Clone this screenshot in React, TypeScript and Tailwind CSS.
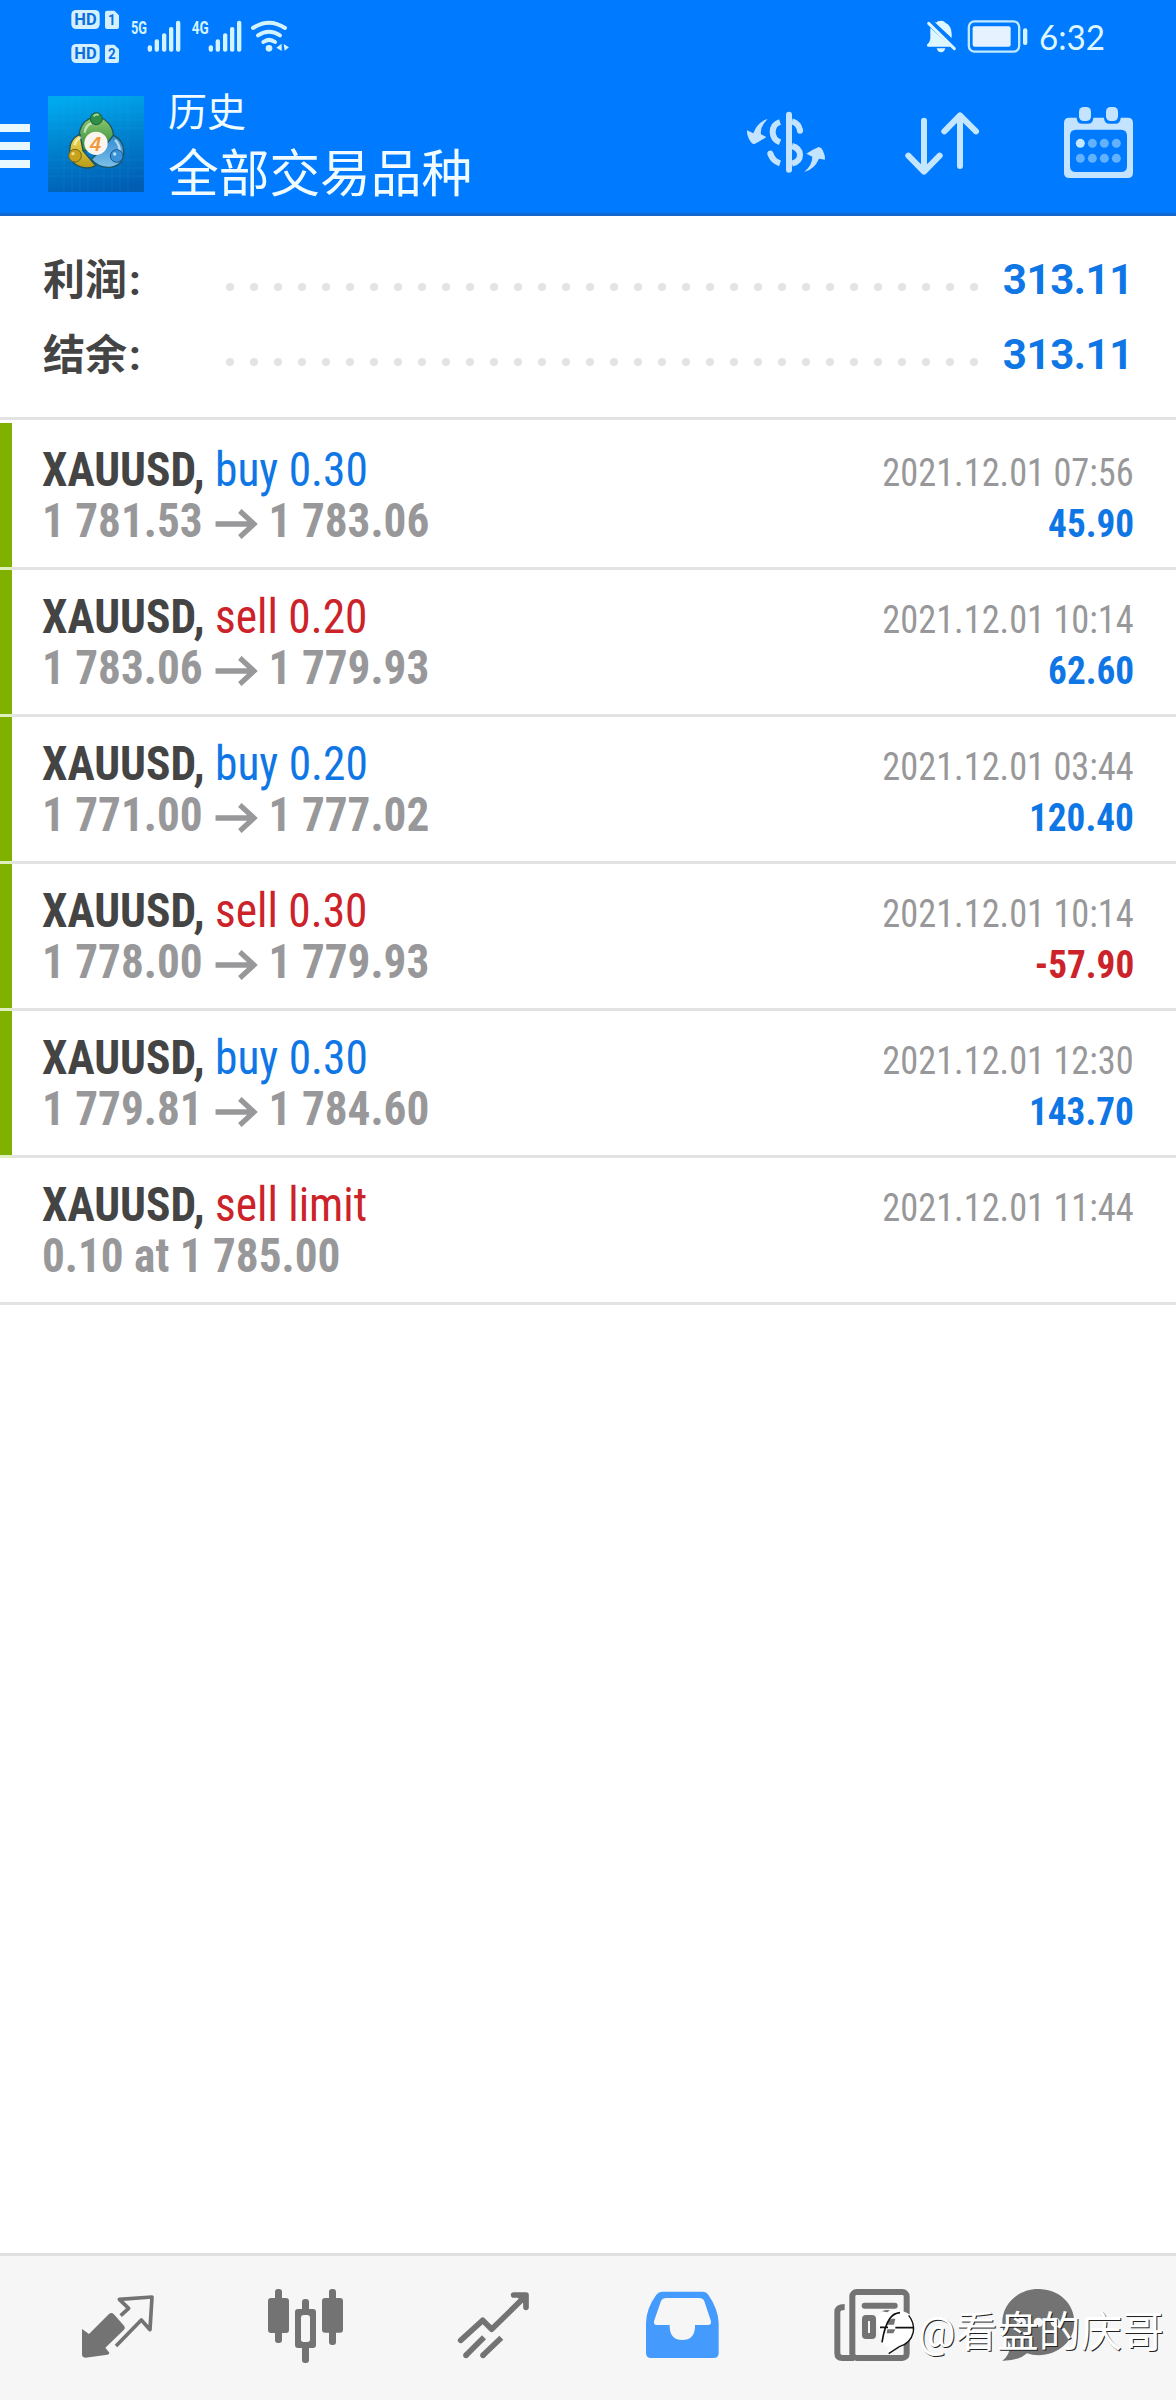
import type { ReactNode } from 'react'

type Deal = {
  side: 'buy' | 'sell'
  action: string
  open?: string
  close?: string
  detail?: string
  time: string
  profit?: string
}

const deals: Deal[] = [
  { side: 'buy', action: 'buy 0.30', open: '1 781.53', close: '1 783.06', time: '2021.12.01 07:56', profit: '45.90' },
  { side: 'sell', action: 'sell 0.20', open: '1 783.06', close: '1 779.93', time: '2021.12.01 10:14', profit: '62.60' },
  { side: 'buy', action: 'buy 0.20', open: '1 771.00', close: '1 777.02', time: '2021.12.01 03:44', profit: '120.40' },
  { side: 'sell', action: 'sell 0.30', open: '1 778.00', close: '1 779.93', time: '2021.12.01 10:14', profit: '-57.90' },
  { side: 'buy', action: 'buy 0.30', open: '1 779.81', close: '1 784.60', time: '2021.12.01 12:30', profit: '143.70' },
  { side: 'sell', action: 'sell limit', detail: '0.10 at 1 785.00', time: '2021.12.01 11:44' },
]

const summary = [
  { label: '利润', value: '313.11' },
  { label: '结余', value: '313.11' },
]

const SignalBars = ({ x }: { x: number }) => (
  <g fill="#d3f4ff">
    <rect x={x} y="136" width="13" height="19" rx="6" />
    <rect x={x + 21} y="118" width="13" height="37" rx="6" />
    <rect x={x + 43} y="100" width="13" height="55" rx="6" />
    <rect x={x + 64} y="81" width="13" height="74" rx="6" />
    <rect x={x + 85} y="62" width="13" height="93" rx="6" />
  </g>
)

const HdBadge = ({ y, sim }: { y: number; sim: string }) => (
  <g fontFamily="Roboto" fontWeight="700" fill="#0b6fdf">
    <rect x="214" y={y} width="85" height="57" rx="14" fill="#d3f0ff" />
    <text x="223" y={y + 46} fontSize="49" textLength="67" lengthAdjust="spacingAndGlyphs">HD</text>
    <path d={`M321 ${y + 2}h22l14 14v35q0 6-6 6h-30q-6 0-6-6v-43q0-6 6-6z`} fill="#d3f0ff" />
    <text x="324" y={y + 46} fontSize="46" textLength="23" lengthAdjust="spacingAndGlyphs">{sim}</text>
  </g>
)

const StatusBar = () => (
  <div className="flex h-[72px] justify-between">
    <svg className="ml-[66px]" width="234" height="72" viewBox="198 0 702 216">
      <HdBadge y={30} sim="1" />
      <HdBadge y={132} sim="2" />
      <g fontFamily="Roboto" fontWeight="700" fontSize="55" fill="#d3f4ff">
        <text x="393" y="102" textLength="48" lengthAdjust="spacingAndGlyphs">5G</text>
        <text x="575" y="103" textLength="51" lengthAdjust="spacingAndGlyphs">4G</text>
      </g>
      <SignalBars x={443} />
      <SignalBars x={626} />
      <g fill="none" stroke="#d3f4ff" strokeWidth="12" strokeLinecap="round">
        <path d="M759 84q48-32 96 0" />
        <path d="M774 106q33-22 66 0" />
        <path d="M790 126q17-13 35 0" />
      </g>
      <circle cx="807" cy="145" r="10" fill="#d3f4ff" />
      <path d="M845 131v22l-16-10zM851 132l16 10-13 10z" fill="#d3f4ff" />
    </svg>
    <svg className="mr-[66px]" width="190" height="72" viewBox="600 0 570 216">
      <path d="M648 68q4-6 15-6 9 0 13 6 19 9 19 34v12l-54-50z" fill="#def7ff" />
      <path d="M631 83l62 57h-69q-5-1-3-6 9-8 10-18z" fill="#def7ff" />
      <path d="M650 145h26q-3 12-13 12t-13-12z" fill="#def7ff" />
      <path d="M626 70l77 76" stroke="#def7ff" strokeWidth="9" strokeLinecap="round" />
      <rect x="746.500" y="64" width="151" height="91" rx="17" fill="none" stroke="#bfeaff" strokeWidth="7" />
      <rect x="758" y="79" width="114" height="61" rx="6" fill="#e6f2ff" />
      <rect x="909" y="85" width="13" height="50" rx="6" fill="#d3f4ff" />
      <text x="957" y="151" fontFamily="Lato" fontSize="106" fill="#def7ff" textLength="198" lengthAdjust="spacingAndGlyphs">6:32</text>
    </svg>
  </div>
)

const AppLogo = () => (
  <svg className="ml-[18px] mt-6" width="96" height="96" viewBox="144 288 288 288">
    <defs>
      <linearGradient id="sky" x1="0.4" y1="0" x2="0.6" y2="1">
        <stop offset="0" stopColor="#00a8ee" />
        <stop offset="0.5" stopColor="#007fcc" />
        <stop offset="1" stopColor="#005db2" />
      </linearGradient>
      <linearGradient id="leaf" x1="0" y1="0" x2="0" y2="1">
        <stop offset="0" stopColor="#8cc66c" />
        <stop offset="1" stopColor="#2c8a3c" />
      </linearGradient>
      <linearGradient id="gold" x1="0" y1="0" x2="0" y2="1">
        <stop offset="0" stopColor="#f0dc50" />
        <stop offset="1" stopColor="#b99a18" />
      </linearGradient>
      <linearGradient id="water" x1="0" y1="0" x2="0" y2="1">
        <stop offset="0" stopColor="#2f8cd0" />
        <stop offset="1" stopColor="#7cc0ea" />
      </linearGradient>
    </defs>
    <rect x="144" y="288" width="288" height="288" fill="url(#sky)" />
    <path
      d="M192 288v288M216 288v288M240 288v288M264 288v288M312 288v288M336 288v288M360 288v288M384 288v288M144 336h288M144 360h288M144 384h288M144 480h288M144 504h288M144 528h288"
      stroke="#4cc4f5"
      strokeOpacity="0.15"
      strokeWidth="2"
    />
    <g stroke="#1d5560" strokeWidth="4">
      <path d="M237 412q0-42 35-58h33q36 18 36 62 0 22-12 36h-80q-12-16-12-40z" fill="url(#leaf)" />
      <path d="M340 406q31 14 31 50 0 40-40 46-36 2-57-24l36-34z" fill="url(#water)" />
      <path d="M240 404q-32 10-31 54 2 40 50 46 18 0 28-7l-38-45z" fill="url(#gold)" />
    </g>
    <path d="M254 398q4-24 20-28M345 420q14 12 14 34M224 436q4-20 20-24" fill="none" stroke="#fff" strokeOpacity="0.6" strokeWidth="7" />
    <circle cx="289" cy="356" r="18" fill="#2f8f45" stroke="#1c5c48" strokeWidth="3" />
    <circle cx="225" cy="467" r="19" fill="#c9a21c" stroke="#6e6420" strokeWidth="3" />
    <circle cx="350" cy="468" r="19" fill="#3a92d8" stroke="#1b5790" strokeWidth="3" />
    <path d="M281 349q6-8 15-4" fill="none" stroke="#a5d8a0" strokeWidth="6" />
    <circle cx="219" cy="461" r="5" fill="#f4e08a" />
    <circle cx="344" cy="462" r="5" fill="#b5e0fa" />
    <circle cx="288" cy="430" r="35" fill="#fbf5f0" />
    <text x="270" y="452" fontFamily="Liberation Sans" fontStyle="italic" fontWeight="700" fontSize="60" fill="#f09a3c">4</text>
  </svg>
)

const HeaderActions = () => (
  <svg className="ml-auto" width="456" height="141" viewBox="0 216 1368 423">
    {/* 货币 */}
    <g fill="none" stroke="#c4e3ff" strokeWidth="18">
      <path d="M207 344v165" strokeLinecap="round" />
      <path d="M180 366q-22 7-22 30 0 22 22 31M151 461q7 22 29 29" />
      <path d="M216 364q20 5 24 28M216 438q24 7 24 27t-24 26" />
      <path d="M151 461l1 3M240 391v1" strokeLinecap="round" />
    </g>
    <path d="M143 357q-24 24-20 46l16 8q-18 12-37 22-7-2-11-9-11-18-10-33l19 9q12-34 43-43z" fill="#c4e3ff" />
    <path d="M253 516q24-22 24-46l-18-9q18-12 37-20 9 1 14 14 6 13 5 24l-18-3q-14 32-44 40z" fill="#c4e3ff" />
    {/* 排序 */}
    <g fill="none" stroke="#c4e6ff" strokeWidth="18" strokeLinecap="round" strokeLinejoin="round">
      <path d="M612 362v152M565 467l47 48 47-48" />
      <path d="M720 498V347M673 394l47-48 48 48" />
    </g>
    {/* 日历 */}
    <path
      d="M1048 353h22q0 18 17 18h16q17 0 17-18h32q0 18 17 18h16q17 0 17-18h21q16 0 16 16v150q0 15-16 15h-175q-16 0-16-15V369q0-16 16-16zM1068 389q-18 0-18 18v91q0 18 18 18h135q18 0 18-18v-91q0-18-18-18z"
      fillRule="evenodd"
      fill="#c4e3ff"
    />
    <rect x="1077" y="321" width="36" height="42" rx="14" fill="#c4e3ff" />
    <rect x="1158" y="321" width="36" height="42" rx="14" fill="#c4e3ff" />
    {[1081, 1117, 1153, 1189].map((cx) => (
      <g key={cx}>
        <circle cx={cx} cy="430" r="13.500" fill={cx === 1081 ? '#c4e9ff' : '#62b2ff'} />
        <circle cx={cx} cy="475" r="13.500" fill="#62b2ff" />
      </g>
    ))}
  </svg>
)

const Header = () => (
  <header className="h-[216px] border-b-[3px] border-[#1268cf] bg-[#007aff] text-[#f0fcff]">
    <StatusBar />
    <div className="flex h-[141px]">
      <div className="mt-[52px] flex w-[30px] flex-col gap-[10px]">
        <span className="h-2 bg-[#e8f8ff]"></span>
        <span className="h-2 bg-[#e8f8ff]"></span>
        <span className="h-2 bg-[#e8f8ff]"></span>
      </div>
      <AppLogo />
      <div className="ml-6 pt-3">
        <p className="text-[39px] leading-[58px]">历史</p>
        <p className="text-[50.7px] leading-[65px]">全部交易品种</p>
      </div>
      <HeaderActions />
    </div>
  </header>
)

const Arrow = () => (
  <svg className="mr-[12px] ml-[13px] inline-block" width="45" height="30" viewBox="0 0 45 30">
    <path d="M0 15h40M26 2l15 13-15 13" fill="none" stroke="#98989a" strokeWidth="5.500" />
  </svg>
)

const DealRow = ({ deal }: { deal: Deal }) => {
  const color = deal.side === 'buy' ? 'text-[#0f76e6]' : 'text-[#cc2229]'
  const profitColor = deal.profit?.startsWith('-') ? 'text-[#cc2229]' : 'text-[#0f76e6]'
  return (
    <li className="flex h-[147px] font-stretch-75%">
      <div className={deal.profit ? 'w-3 border-b-[3px] border-[#e0efc0] bg-[#80b000]' : 'w-3 border-b-[3px] border-[#e3e3e3]'}></div>
      <div className="flex-1 border-b-[3px] border-[#e3e3e3] pt-[21px] pr-[42px] pl-[30px]">
        <div className="flex h-[51px] items-baseline justify-between leading-[51px]">
          <p className="origin-left scale-x-[0.946] text-[48px]">
            <span className="font-bold text-[#444]">XAUUSD,</span> <span className={color}>{deal.action}</span>
          </p>
          <p className="origin-right scale-x-[0.932] text-[39px] text-[#98989a]">{deal.time}</p>
        </div>
        <div className="flex h-[51px] items-baseline justify-between leading-[51px] font-bold">
          <p className="origin-left scale-x-[0.942] text-[48px] text-[#98989a]">
            {deal.detail ?? (
              <>
                {deal.open}
                <Arrow />
                {deal.close}
              </>
            )}
          </p>
          {deal.profit && <p className={`origin-right scale-x-[0.955] text-[39px] ${profitColor}`}>{deal.profit}</p>}
        </div>
      </div>
    </li>
  )
}

const NavIcon = ({ x, children }: { x: number; children: ReactNode }) => (
  <svg width="188" height="144" viewBox={`${x} 48 564 432`}>
    {children}
  </svg>
)

const NavBar = () => (
  <nav className="relative flex h-[147px] border-t-[3px] border-[#e0e0e0] bg-[#f6f6f6] pl-6">
    {/* 行情 */}
    <NavIcon x={72}>
      <path d="M246 267l21 15 60-60q7-6 14 0l31 35q5 6 0 12l-56 54 12 15q1 4-6 6l-66 9q-10 0-10-10z" fill="#737373" />
      <path d="M362 227l24-22-28-27 98-7-6 98-26-29-76 78" fill="none" stroke="#737373" strokeWidth="11" strokeLinejoin="round" />
    </NavIcon>
    {/* 图表 */}
    <NavIcon x={636}>
      <g fill="#737373">
        <rect x="825" y="147" width="21" height="162" rx="9" />
        <rect x="804" y="174" width="63" height="105" rx="9" />
        <rect x="906" y="177" width="21" height="192" rx="9" />
        <rect x="885" y="207" width="63" height="117" rx="9" />
        <rect x="987" y="147" width="21" height="168" rx="9" />
        <rect x="966" y="174" width="63" height="104" rx="9" />
      </g>
      <rect x="903" y="225" width="27" height="81" rx="8" fill="#f6f6f6" />
    </NavIcon>
    {/* 交易 */}
    <NavIcon x={0}>
      <g fill="none" stroke="#737373" strokeWidth="17">
        <path d="M182 301l66-60 27 27 98-96" strokeLinecap="round" strokeLinejoin="round" />
        <path d="M341 165h37v37" strokeLinecap="round" strokeLinejoin="round" />
        <path d="M252 292l-54 54M304 293l-55 53" />
      </g>
      <circle cx="198" cy="346" r="8.500" fill="#737373" />
      <circle cx="249" cy="346" r="8.500" fill="#737373" />
      <path d="M345 165h33v33z" fill="#737373" />
    </NavIcon>
    {/* 历史 */}
    <NavIcon x={564}>
      <path
        d="M786 155h123q10 0 16 9 30 44 31 85v90q0 15-15 15H753q-15 0-15-15v-90q1-44 31-85 7-9 17-9zM799 174q-12 0-16 9l-20 58q-5 14 8 14h38v7q2 38 38 38t38-38v-7h38q14 0 9-14l-19-57q-4-10-16-10z"
        fillRule="evenodd"
        fill="#449bfd"
      />
    </NavIcon>
    {/* 新闻 */}
    <NavIcon x={0}>
      <g fill="none" stroke="#737373" strokeWidth="18">
        <rect x="229" y="156" width="163" height="198" rx="13" />
        <path d="M206 201q-22 0-22 15v123q0 15 15 15h35" />
        <path d="M266 197h90" strokeLinecap="round" />
        <rect x="267" y="234" width="24" height="54" rx="3" />
        <path d="M318 234h42M318 288h42" />
      </g>
    </NavIcon>
    {/* 消息 */}
    <NavIcon x={564}>
      <path d="M787 147c62 0 108 44 108 100s-48 99-108 99q-18 0-34-6-25 23-74 22 21-15 25-48-25-28-25-67c0-56 48-100 108-100z" fill="#737373" />
      <g fill="#f6f6f6">
        <circle cx="736" cy="247" r="14" />
        <circle cx="787" cy="247" r="14" />
        <circle cx="838" cy="247" r="14" />
      </g>
    </NavIcon>

    {/* 水印 */}
    <div className="absolute top-[50px] left-[876px] flex items-center whitespace-nowrap">
      <svg width="42" height="54" viewBox="48 64 126 162">
        <path d="M50 112q0-24 22-32 50-12 78 10 14 20 12 44-4 40-50 54l-32 20 8-20q-22-6-26-26z" fill="#fff" />
        <path d="M80 120q2-14 14-18h12l-4 18zM82 134h24l-6 12h-20zM66 80q12-6 24-3l-8 6z" fill="#737373" />
        <path d="M66 173q8-50 24-72 10-15 30-17M60 128h24M106 129h54" fill="none" stroke="#111" strokeWidth="5" />
        <path d="M146 92q18 22 14 50-8 34-42 44l-32 21" fill="none" stroke="#111" strokeWidth="4" />
      </svg>
      <p className="text-[41.7px] leading-[54px] text-white [text-shadow:1px_1px_0.5px_#222]">@看盘的庆哥</p>
    </div>
  </nav>
)

export default function App() {
  return (
    <div className="flex h-[2400px] w-[1176px] flex-col overflow-hidden bg-white font-[Roboto,'Noto_Sans_CJK_SC',sans-serif]">
      <Header />
      <section className="h-[204px] border-b-[3px] border-[#e3e3e3] pt-[26px] pr-[43px] pl-[43px]">
        {summary.map((item) => (
          <div key={item.label} className="flex h-[75px] items-center text-[42px] leading-[75px] font-bold">
            <p className="w-[183px] pt-[2px] text-[#444]">
              {item.label}
              <span className="ml-[2px]">:</span>
            </p>
            <div className="mt-[14px] flex gap-4">
              {Array.from({ length: 32 }, (_, i) => (
                <span key={i} className="size-2 rounded-full bg-[#e3e3e3]"></span>
              ))}
            </div>
            <p className="ml-auto tracking-[-0.4px] text-[#0f76e6]">{item.value}</p>
          </div>
        ))}
      </section>
      <ul className="flex-1 pt-[3px]">
        {deals.map((deal, i) => (
          <DealRow key={i} deal={deal} />
        ))}
      </ul>
      <NavBar />
    </div>
  )
}
